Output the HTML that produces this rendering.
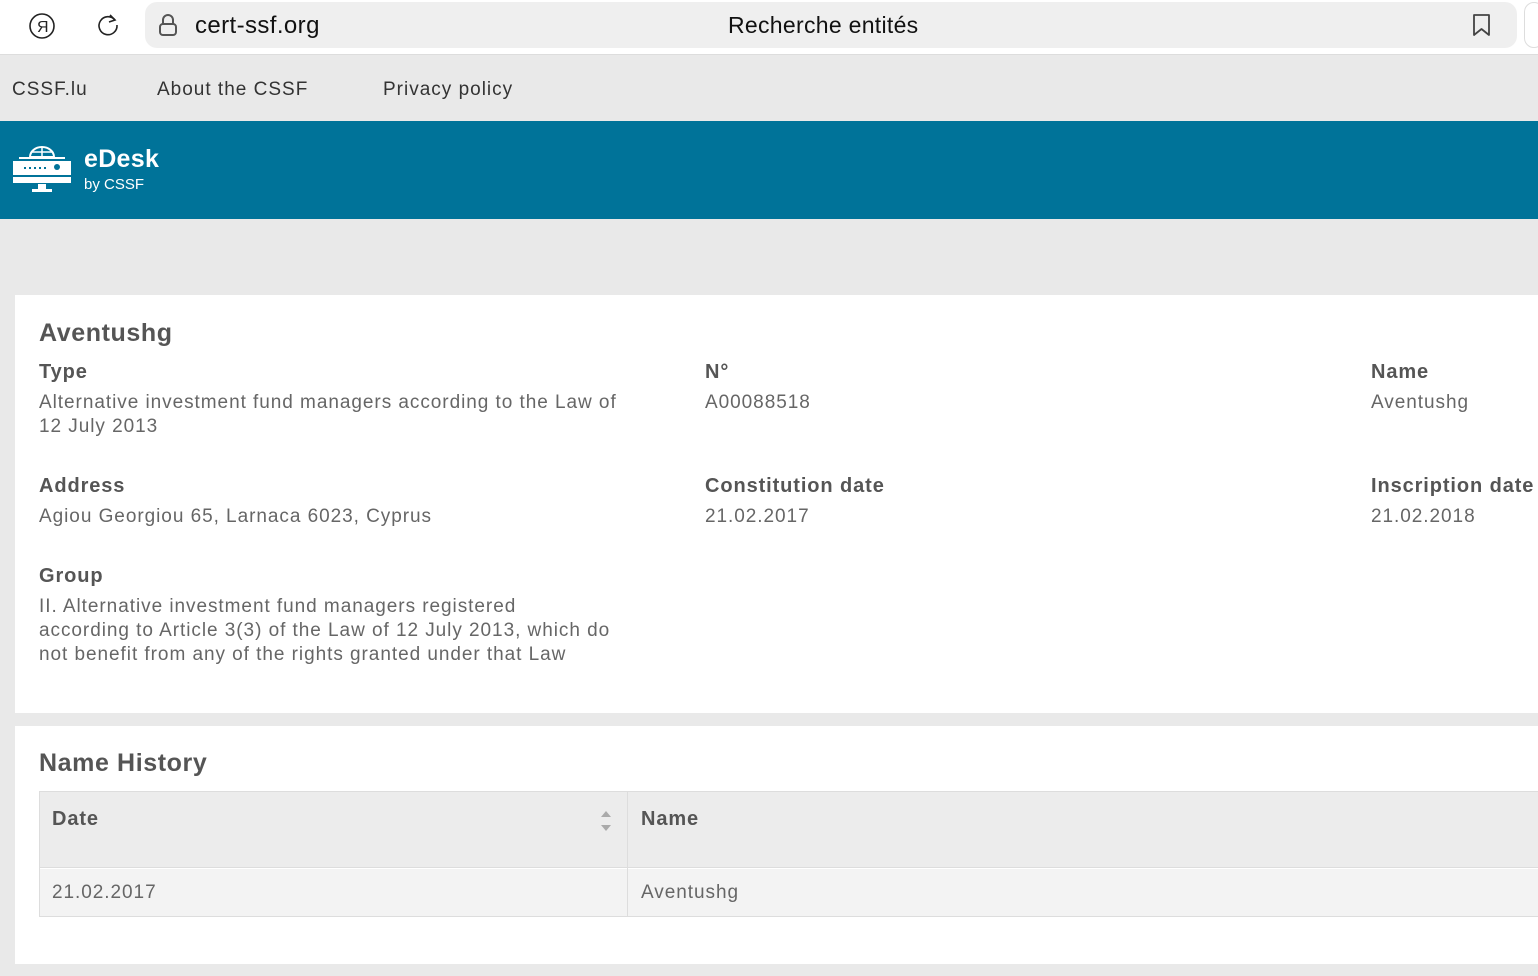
<!DOCTYPE html>
<html><head><meta charset="utf-8"><style>
*{margin:0;padding:0;box-sizing:border-box}
body{width:1538px;height:976px;overflow:hidden;background:#e9e9e9;font-family:"Liberation Sans",sans-serif;color:#555;position:relative}
.abs{position:absolute}
.top{left:0;top:0;width:1538px;height:55px;background:#fff;border-bottom:1px solid #ddd}
.url{left:145px;top:2px;width:1372px;height:46px;background:#efefef;border-radius:12px}
.nav{top:79px;font-size:19px;color:#333;letter-spacing:1px}
.band{left:0;top:121px;width:1538px;height:98px;background:#007399}
.card{background:#fff;left:15px;width:1523px}
.lbl{font-size:20px;font-weight:bold;color:#555;letter-spacing:0.9px;white-space:nowrap}
.val{font-size:19px;color:#666;line-height:24px;letter-spacing:0.95px;white-space:nowrap}
</style></head><body>
<div class="abs top"></div>
<svg class="abs" style="left:28px;top:12px" width="28" height="28"><circle cx="14" cy="14" r="12" fill="none" stroke="#222" stroke-width="1.6"/><text x="9" y="20" font-size="16" font-family="Liberation Sans" fill="#222">Я</text></svg>
<svg class="abs" style="left:95px;top:12px" width="26" height="26"><path d="M20 8 A9 9 0 1 0 22 13" fill="none" stroke="#222" stroke-width="1.6"/><path d="M15 3 L20 8 L14 10" fill="none" stroke="#222" stroke-width="1.6"/></svg>
<div class="abs url"></div>
<svg class="abs" style="left:157px;top:13px" width="22" height="24"><path d="M6 11 V7 a5 5 0 0 1 10 0 V11" fill="none" stroke="#555" stroke-width="2"/><rect x="3" y="11" width="16" height="11" rx="3" fill="none" stroke="#555" stroke-width="2"/></svg>
<div class="abs" style="left:195px;top:12px;font-size:24px;color:#111;letter-spacing:0.4px">cert-ssf.org</div>
<div class="abs" style="left:728px;top:12px;font-size:23px;color:#111;letter-spacing:0.3px">Recherche entités</div>
<svg class="abs" style="left:1471px;top:13px" width="22" height="24"><path d="M3 2 H18 V22 L10.5 16 L3 22 Z" fill="none" stroke="#444" stroke-width="1.8" stroke-linejoin="round"/></svg>
<div class="abs" style="left:1524px;top:2px;width:20px;height:46px;border:1px solid #ddd;border-radius:10px"></div>
<div class="abs nav" style="left:12px">CSSF.lu</div>
<div class="abs nav" style="left:157px">About the CSSF</div>
<div class="abs nav" style="left:383px">Privacy policy</div>
<div class="abs band"></div>
<svg class="abs" style="left:12px;top:146px" width="60" height="48"><path d="M18 11 a12 10 0 0 1 24 0 Z" fill="none" stroke="#fff" stroke-width="2"/><path d="M30 1 V11 M20 6 H40" stroke="#fff" stroke-width="1.5"/><rect x="7" y="11" width="46" height="2" fill="#fff"/><rect x="1" y="15" width="58" height="14" fill="#fff"/><rect x="1" y="31" width="58" height="6" fill="#fff"/><rect x="26" y="38" width="8" height="5" fill="#fff"/><rect x="20" y="43" width="20" height="3" fill="#fff"/><g fill="#007399"><rect x="12" y="21" width="2" height="2"/><rect x="17" y="21" width="2" height="2"/><rect x="22" y="21" width="2" height="2"/><rect x="27" y="21" width="2" height="2"/><rect x="32" y="21" width="2" height="2"/><circle cx="45" cy="21" r="3"/></g></svg>
<div class="abs" style="left:84px;top:145px;font-size:25px;font-weight:bold;color:#fff;letter-spacing:0.3px">eDesk</div>
<div class="abs" style="left:84px;top:176px;font-size:15px;color:#fff">by CSSF</div>
<div class="abs card" style="top:295px;height:418px"></div>
<div class="abs" style="left:39px;top:319px;font-size:25px;font-weight:bold;color:#555;letter-spacing:0.6px">Aventushg</div>
<div class="abs lbl" style="left:39px;top:361px">Type</div>
<div class="abs val" style="left:39px;top:391px">Alternative investment fund managers according to the Law of<br>12 July 2013</div>
<div class="abs lbl" style="left:705px;top:361px">N°</div>
<div class="abs val" style="left:705px;top:391px">A00088518</div>
<div class="abs lbl" style="left:1371px;top:361px">Name</div>
<div class="abs val" style="left:1371px;top:391px">Aventushg</div>
<div class="abs lbl" style="left:39px;top:475px">Address</div>
<div class="abs val" style="left:39px;top:505px">Agiou Georgiou 65, Larnaca 6023, Cyprus</div>
<div class="abs lbl" style="left:705px;top:475px">Constitution date</div>
<div class="abs val" style="left:705px;top:505px">21.02.2017</div>
<div class="abs lbl" style="left:1371px;top:475px">Inscription date</div>
<div class="abs val" style="left:1371px;top:505px">21.02.2018</div>
<div class="abs lbl" style="left:39px;top:565px">Group</div>
<div class="abs val" style="left:39px;top:595px">II. Alternative investment fund managers registered<br>according to Article 3(3) of the Law of 12 July 2013, which do<br>not benefit from any of the rights granted under that Law</div>
<div class="abs card" style="top:726px;height:238px"></div>
<div class="abs" style="left:39px;top:749px;font-size:25px;font-weight:bold;color:#555;letter-spacing:0.6px">Name History</div>
<div class="abs" style="left:39px;top:791px;width:1499px;height:126px;border:1px solid #ddd;border-right:none"></div>
<div class="abs" style="left:40px;top:792px;width:1498px;height:76px;background:#ececec;border-bottom:1px solid #ddd"></div>
<div class="abs" style="left:40px;top:869px;width:1498px;height:47px;background:#f3f3f3"></div>
<div class="abs" style="left:627px;top:792px;width:1px;height:124px;background:#ddd"></div>
<div class="abs lbl" style="left:52px;top:808px">Date</div>
<div class="abs lbl" style="left:641px;top:808px">Name</div>
<svg class="abs" style="left:599px;top:808px" width="14" height="26"><path d="M2 9 L7 3 L12 9 Z M2 17 L7 23 L12 17 Z" fill="#aaa"/></svg>
<div class="abs val" style="left:52px;top:881px">21.02.2017</div>
<div class="abs val" style="left:641px;top:881px">Aventushg</div>
</body></html>
